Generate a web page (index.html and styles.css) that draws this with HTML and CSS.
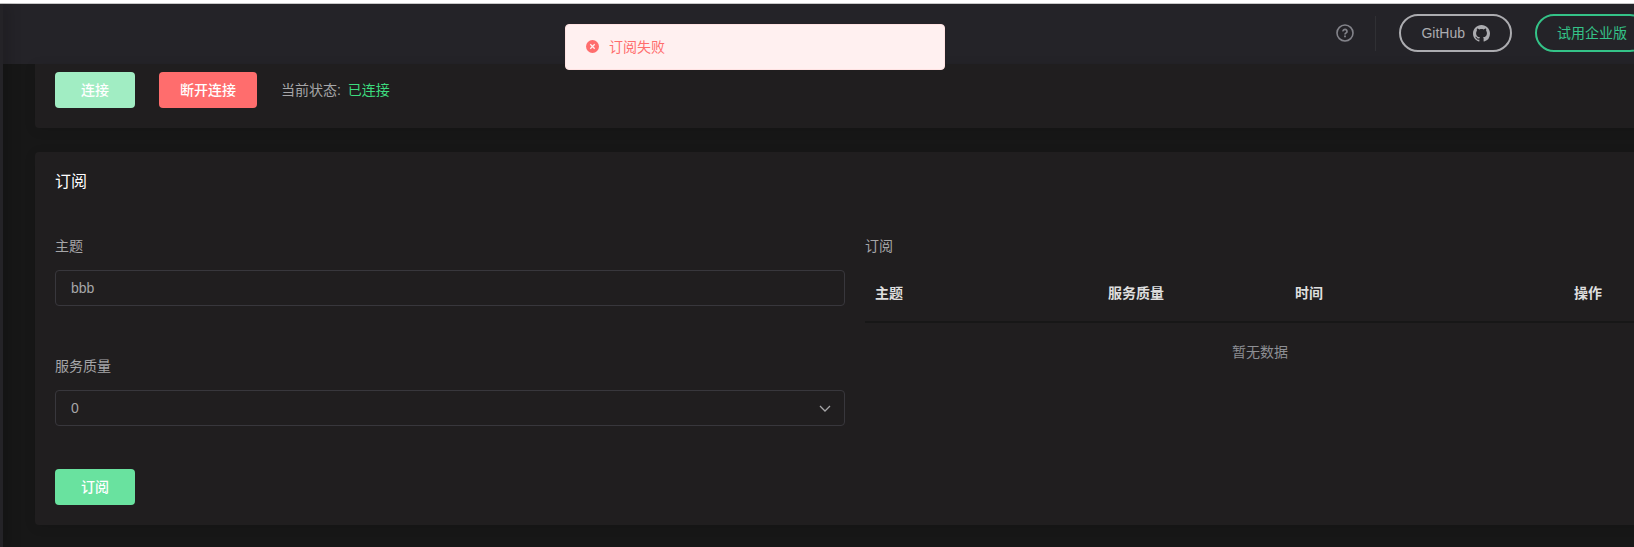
FILE: index.html
```html
<!DOCTYPE html>
<html lang="zh-CN">
<head>
  <meta charset="UTF-8" />
  <meta name="viewport" content="width=device-width, initial-scale=1" />
  <title>WebSocket</title>
  <link rel="stylesheet" href="styles.css">
</head>
<body>
  <div class="app">
    <aside class="sidebar"></aside>

    <main class="main">
      <header class="header">
        <a href="#" class="header__help" aria-label="帮助">
          <svg width="18" height="18" viewBox="0 0 18 18" fill="none" stroke="currentColor">
            <circle cx="9" cy="9" r="8" stroke-width="1.6" />
            <path d="M7 7.4a2 1.9 0 1 1 3.1 1.5c-.8.5-1.1.8-1.1 1.6" stroke-width="1.7" />
            <path d="M9 11.5v1.7" stroke-width="1.8" />
          </svg>
        </a>
        <span class="header__divider"></span>
        <a href="#" class="header__btn">
          GitHub
          <svg width="17" height="17" viewBox="0 0 16 16" fill="currentColor">
            <path d="M8 0C3.58 0 0 3.58 0 8c0 3.54 2.29 6.53 5.47 7.59.4.07.55-.17.55-.38 0-.19-.01-.82-.01-1.49-2.01.37-2.53-.49-2.69-.94-.09-.23-.48-.94-.82-1.13-.28-.15-.68-.52-.01-.53.63-.01 1.08.58 1.23.82.72 1.21 1.87.87 2.33.66.07-.52.28-.87.51-1.07-1.78-.2-3.64-.89-3.64-3.95 0-.87.31-1.59.82-2.15-.08-.2-.36-1.02.08-2.12 0 0 .67-.21 2.2.82.64-.18 1.32-.27 2-.27s1.36.09 2 .27c1.53-1.04 2.2-.82 2.2-.82.44 1.1.16 1.92.08 2.12.51.56.82 1.27.82 2.15 0 3.07-1.87 3.75-3.65 3.95.29.25.54.73.54 1.48 0 1.07-.01 1.93-.01 2.2 0 .21.15.46.55.38A8.01 8.01 0 0 0 16 8c0-4.42-3.58-8-8-8z" />
          </svg>
        </a>
        <a href="#" class="header__btn header__btn--green">试用企业版</a>
      </header>

      <div class="content">
        <section class="card card--connect">
          <button type="button" class="btn btn--disabled" disabled>连接</button>
          <button type="button" class="btn btn--danger">断开连接</button>
          <p class="status">当前状态: <span class="status__value">已连接</span></p>
        </section>

        <section class="card">
          <h2 class="card__title">订阅</h2>
          <div class="row">
            <form class="form">
              <div class="form__item">
                <label for="topic" class="label">主题</label>
                <input type="text" id="topic" class="field" value="bbb" />
              </div>
              <div class="form__item">
                <label for="qos" class="label">服务质量</label>
                <div class="select">
                  <select id="qos" class="field">
                    <option>0</option>
                    <option>1</option>
                    <option>2</option>
                  </select>
                  <svg class="select__arrow" width="12" height="8" viewBox="0 0 12 8" fill="none" stroke="currentColor" stroke-width="1.3">
                    <path d="M1 1l5 5 5-5" />
                  </svg>
                </div>
              </div>
              <button type="button" class="btn">订阅</button>
            </form>

            <div class="subs">
              <p class="label">订阅</p>
              <table class="table">
                <colgroup>
                  <col class="table__topic">
                  <col class="table__qos">
                  <col>
                  <col class="table__oper">
                </colgroup>
                <thead>
                  <tr>
                    <th>主题</th>
                    <th>服务质量</th>
                    <th>时间</th>
                    <th>操作</th>
                  </tr>
                </thead>
                <tbody>
                  <tr>
                    <td colspan="4" class="table__empty">暂无数据</td>
                  </tr>
                </tbody>
              </table>
            </div>
          </div>
        </section>
      </div>
    </main>
  </div>

  <div class="message" role="alert">
    <svg width="13" height="13" viewBox="0 0 13 13">
      <circle cx="6.5" cy="6.5" r="6.5" fill="#ff6d6d" />
      <path d="M4.3 4.3l4.4 4.4M8.7 4.3L4.3 8.7" stroke="#fff0f0" stroke-width="1.3" />
    </svg>
    <span>订阅失败</span>
  </div>
</body>
</html>
```

FILE: styles.css
```css
* {
  box-sizing: border-box;
}
html {
  height: 100%;
}
body {
  height: 100%;
  margin: 0;
  overflow: hidden;
  background-color: #171717;
  border-top: 3px solid #fff;
  color: #a6a6a8;
  font-family: "Liberation Sans", "Noto Sans CJK SC", sans-serif;
  font-size: 14px;
  line-height: 20px;
}
h2, p {
  margin: 0;
}
.app {
  display: flex;
  min-height: 100%;
  border-top: 1px solid #c8c8c8;
}

/* left menu */
.sidebar {
  position: relative;
  z-index: 2;
  flex: none;
  width: 3px;
  background: #242327;
  box-shadow: 2px 0 14px rgba(0, 0, 0, 0.6);
}
/* runs past the right edge of the window */
.main {
  flex: none;
  width: calc(100% + 70px);
}

/* top bar */
.header {
  display: flex;
  align-items: center;
  justify-content: flex-end;
  height: 60px;
  padding: 0 58px 2px 0;
  background: #242328;
}
.header__help {
  display: flex;
  color: #83838a;
}
.header__divider {
  width: 1px;
  height: 35px;
  margin: 0 23px 0 21px;
  background: #303034;
}
.header__btn {
  display: flex;
  align-items: center;
  gap: 8px;
  height: 38px;
  padding: 0 20px;
  border: 2px solid #acacb0;
  border-radius: 19px;
  color: #acacb0;
  text-decoration: none;
}
.header__btn--green {
  margin-left: 23px;
  border-color: #34c388;
  color: #34c388;
}

.content {
  padding: 0 32px;
}
.card {
  margin-bottom: 24px;
  padding: 20px;
  background: #201e1f;
  border-radius: 4px;
  box-shadow: 0 2px 12px rgba(0, 0, 0, 0.1);
}
.card--connect {
  display: flex;
  align-items: center;
  gap: 24px;
  padding-top: 8px;
  border-radius: 0 0 4px 4px;
}
.card__title {
  margin-bottom: 44px;
  color: #fff;
  font-size: 16px;
  font-weight: 400;
  line-height: 20px;
}

.btn {
  min-width: 80px;
  height: 36px;
  padding: 0 20px;
  border: none;
  border-radius: 4px;
  background: #69e29f;
  color: #fff;
  font: inherit;
  font-weight: 500;
  cursor: pointer;
}
.btn--disabled {
  background: #a1edc3;
  cursor: not-allowed;
}
.btn--danger {
  min-width: 98px;
  background: #ff6d6d;
}
.status__value {
  margin-left: 3px;
  color: #3ddb7e;
}

/* subscribe form and list */
.row {
  display: grid;
  grid-template-columns: 1fr 1fr;
  gap: 20px;
}
.form__item {
  margin-bottom: 50px;
}
.form__item + .form__item {
  margin-bottom: 43px;
}
.label {
  display: block;
  height: 34px;
}
.field {
  display: block;
  width: 100%;
  height: 36px;
  padding: 0 15px;
  border: 1px solid #38373c;
  border-radius: 4px;
  background: transparent;
  color: #a6a6a8;
  font: inherit;
  appearance: none;
}
.select {
  position: relative;
}
.select__arrow {
  position: absolute;
  top: 15px;
  right: 14px;
  pointer-events: none;
}
.table {
  width: 100%;
  table-layout: fixed;
  border-collapse: collapse;
}
.table__topic {
  width: 233px;
}
.table__qos {
  width: 187px;
}
.table__oper {
  width: 91px;
}
.table th {
  height: 52px;
  padding: 0 10px 6px;
  border-bottom: 2px solid #171717;
  color: #dedede;
  text-align: left;
}
.table__empty {
  height: 58px;
  padding: 0;
  color: #8d8f94;
  text-align: center;
}

/* toast */
.message {
  position: absolute;
  top: 24px;
  left: 565px;
  display: flex;
  align-items: center;
  gap: 10px;
  width: 380px;
  height: 46px;
  padding: 0 20px 1px;
  border: 1px solid #ffe2e2;
  border-radius: 4px;
  background: #fff0f0;
  color: #ff6d6d;
  z-index: 10;
}
```
